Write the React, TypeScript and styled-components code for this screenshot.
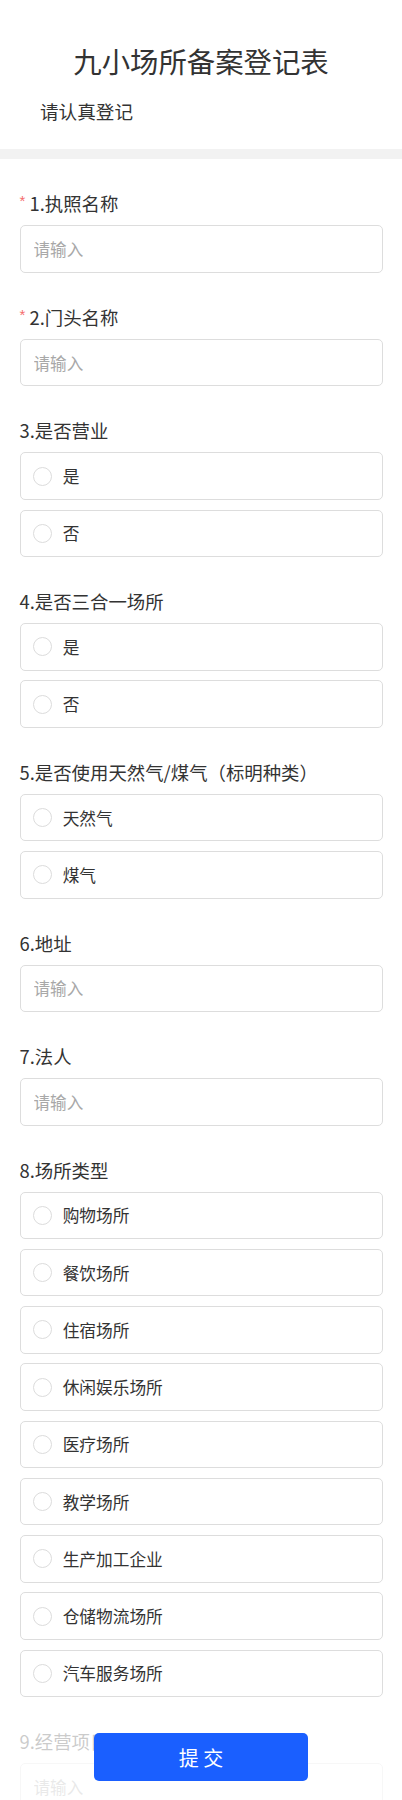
import React from "react";
import styled, { createGlobalStyle } from "styled-components";

const GlobalStyle = createGlobalStyle`
  html, body {
    margin: 0;
    padding: 0;
    background: #ffffff;
  }
  body {
    font-family: "Noto Sans CJK SC", "Noto Sans", sans-serif;
    color: #333333;
  }
  * { box-sizing: border-box; }
`;

const Page = styled.div`
  height: 100vh;
  overflow-y: auto;
  scrollbar-width: none;
  &::-webkit-scrollbar { display: none; }
  background: #ffffff;
`;

const Header = styled.header`
  padding: 40.8px 0 25.6px;
  display: flex;
  flex-direction: column;
  gap: 17.1px;
`;

const Title = styled.h1`
  margin: 0;
  text-align: center;
  font-size: 28.4px;
  line-height: 40px;
  font-weight: 400;
  color: #333333;
`;

const Subtitle = styled.p`
  margin: 0;
  padding-left: 40px;
  font-size: 18.6px;
  line-height: 26px;
  color: #333333;
`;

const Divider = styled.div`
  height: 10px;
  background: #f2f2f2;
`;

const Form = styled.form`
  padding: 0 19.5px 120px;
`;

const Question = styled.section`
  padding-top: 32px;
`;

const Label = styled.div`
  font-size: 18.4px;
  line-height: 24px;
  color: #333333;
  margin-bottom: 10px;
  white-space: nowrap;
`;

const Required = styled.span`
  color: #f56c6c;
  font-family: "Liberation Sans", sans-serif;
  font-size: 15px;
  display: inline-block;
  width: 10px;
  vertical-align: top;
  line-height: 20px;
`;

const TextInput = styled.input`
  display: block;
  width: 100%;
  height: 47.5px;
  border: 1px solid #dddddd;
  border-radius: 5px;
  padding: 0 13px;
  font-family: "Noto Sans CJK SC", sans-serif;
  font-size: 16.6px;
  color: #333333;
  outline: none;
  background: #ffffff;
  &::placeholder {
    color: #a8a8a8;
  }
`;

const Options = styled.div`
  display: flex;
  flex-direction: column;
  gap: 9.75px;
`;

const Option = styled.label`
  display: flex;
  align-items: center;
  gap: 10.4px;
  height: 47.5px;
  padding-left: 12.8px;
  border: 1px solid #dddddd;
  border-radius: 5px;
  font-size: 16.7px;
  color: #333333;
  background: #ffffff;
`;

const Radio = styled.span`
  width: 19px;
  height: 19px;
  border-radius: 50%;
  border: 1px solid #dcdcdc;
  flex: none;
`;

const Footer = styled.div`
  position: fixed;
  left: 0;
  right: 0;
  bottom: 0;
  padding: 18px 0 19px;
  display: flex;
  justify-content: center;
  background: rgba(255, 255, 255, 0.75);
`;

const SubmitButton = styled.button`
  width: 214.5px;
  height: 48px;
  border: none;
  border-radius: 5px;
  background: #1a5fff;
  color: #ffffff;
  font-family: "Noto Sans CJK SC", sans-serif;
  font-size: 20px;
  white-space: pre;
`;

type Q =
  | { kind: "input"; label: string; required?: boolean }
  | { kind: "radio"; label: string; options: string[] };

const questions: Q[] = [
  { kind: "input", label: "1.执照名称", required: true },
  { kind: "input", label: "2.门头名称", required: true },
  { kind: "radio", label: "3.是否营业", options: ["是", "否"] },
  { kind: "radio", label: "4.是否三合一场所", options: ["是", "否"] },
  {
    kind: "radio",
    label: "5.是否使用天然气/煤气（标明种类）",
    options: ["天然气", "煤气"],
  },
  { kind: "input", label: "6.地址" },
  { kind: "input", label: "7.法人" },
  {
    kind: "radio",
    label: "8.场所类型",
    options: [
      "购物场所",
      "餐饮场所",
      "住宿场所",
      "休闲娱乐场所",
      "医疗场所",
      "教学场所",
      "生产加工企业",
      "仓储物流场所",
      "汽车服务场所",
    ],
  },
  { kind: "input", label: "9.经营项目" },
  { kind: "input", label: "10.联系电话" },
];

export default function App() {
  return (
    <>
      <GlobalStyle />
      <Page>
        <Header>
          <Title>九小场所备案登记表</Title>
          <Subtitle>请认真登记</Subtitle>
        </Header>
        <Divider />
        <Form onSubmit={(e) => e.preventDefault()}>
          {questions.map((q, i) => (
            <Question key={i}>
              <Label>
                {q.kind === "input" && q.required && <Required>*</Required>}
                {q.label}
              </Label>
              {q.kind === "input" ? (
                <TextInput placeholder="请输入" />
              ) : (
                <Options>
                  {q.options.map((o) => (
                    <Option key={o}>
                      <Radio />
                      {o}
                    </Option>
                  ))}
                </Options>
              )}
            </Question>
          ))}
        </Form>
        <Footer>
          <SubmitButton type="button">提 交</SubmitButton>
        </Footer>
      </Page>
    </>
  );
}
